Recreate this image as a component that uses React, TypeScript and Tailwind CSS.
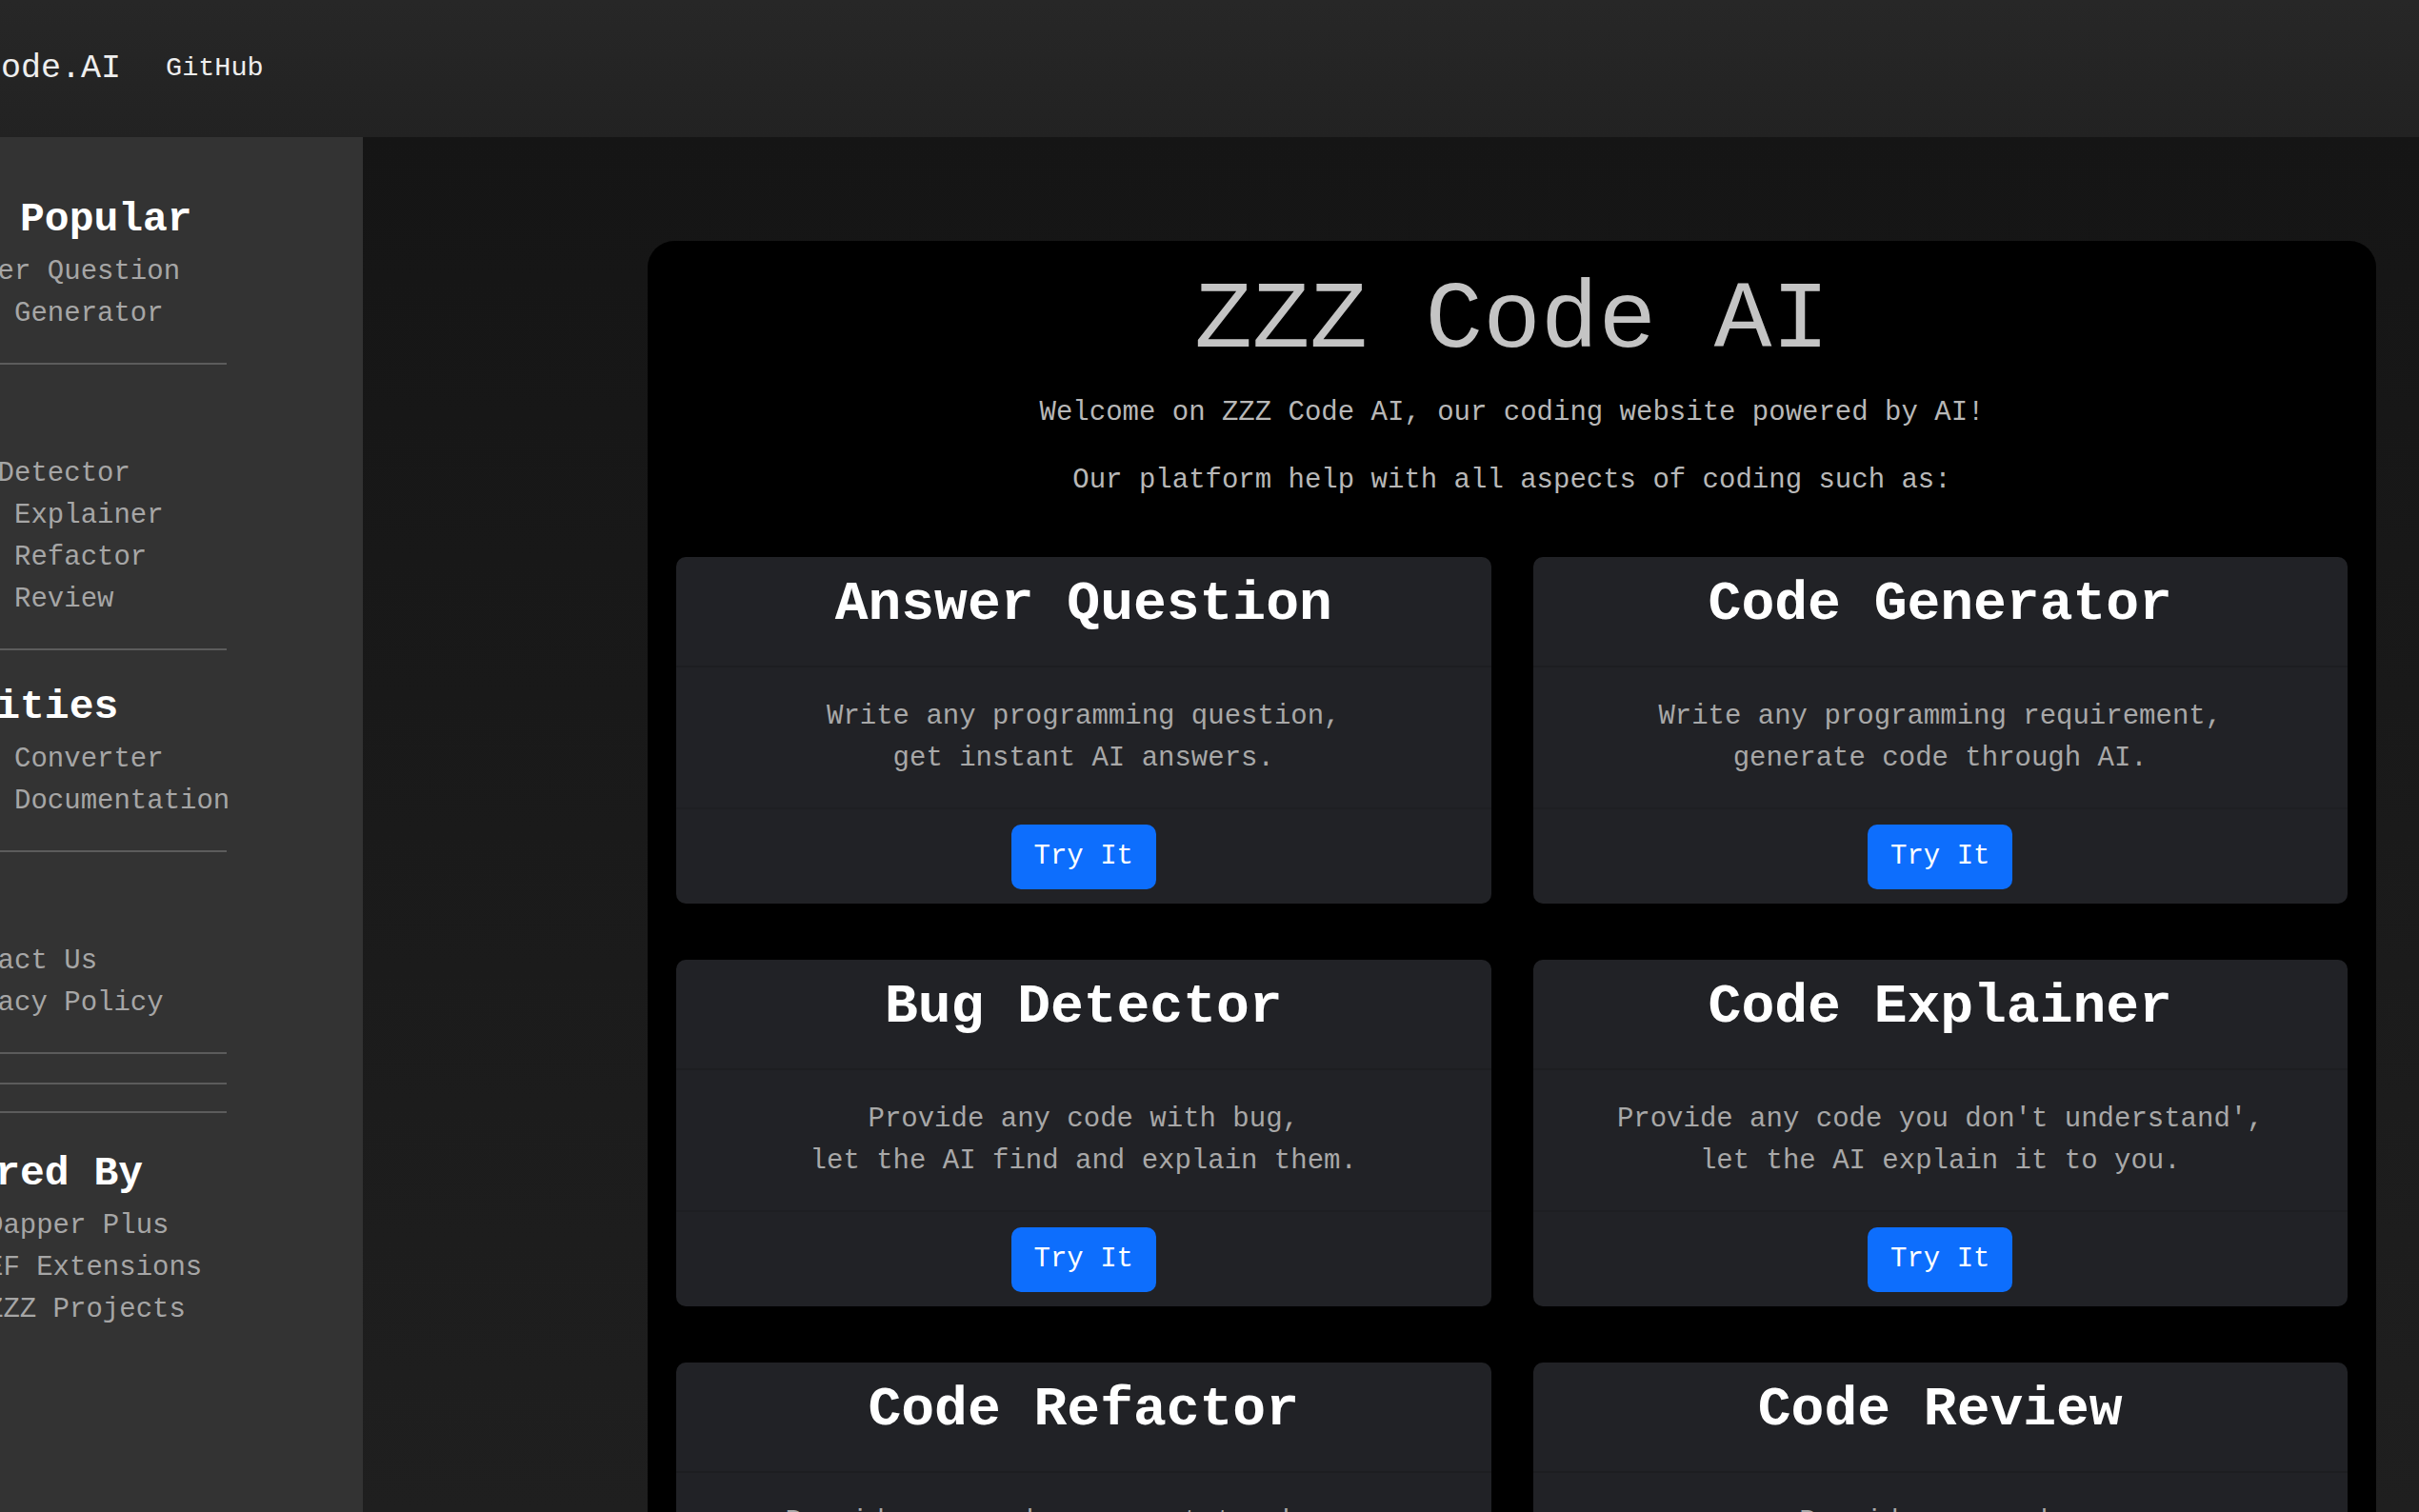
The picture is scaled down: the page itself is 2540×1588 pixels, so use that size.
import React from 'react';

const sections = [
  { title: 'Most Popular', items: ['Answer Question', 'Code Generator'] },
  { title: 'Code', items: ['Bug Detector', 'Code Explainer', 'Code Refactor', 'Code Review'] },
  { title: 'Utilities', items: ['Code Converter', 'Code Documentation'] },
  { title: 'Info', items: ['Contact Us', 'Privacy Policy'] },
];

const cards = [
  { title: 'Answer Question', lines: ['Write any programming question,', 'get instant AI answers.'] },
  { title: 'Code Generator', lines: ['Write any programming requirement,', 'generate code through AI.'] },
  { title: 'Bug Detector', lines: ['Provide any code with bug,', 'let the AI find and explain them.'] },
  { title: 'Code Explainer', lines: ["Provide any code you don't understand',", 'let the AI explain it to you.'] },
  { title: 'Code Refactor', lines: ['Provide any code you want to change,', 'let the AI refactor it for you.'] },
  { title: 'Code Review', lines: ['Provide any code,', 'let the AI review it for you.'] },
];

const Card = ({ title, lines }: { title: string; lines: string[] }) => {
  return (
    <div className="bg-[#212226] rounded-[10px] overflow-hidden flex flex-col">
      <div className="h-[116px] border-b-2 border-[#1d1e21] text-center pt-[15px]">
        <h2 className="text-[58px] leading-[70px] font-bold text-white">{title}</h2>
      </div>
      <div className="py-[30px] text-center text-[29px] leading-[43.5px] text-[#a8a8a8]">
        {lines.map((l) => (
          <div key={l} className="whitespace-pre">{l}</div>
        ))}
      </div>
      <div className="h-[101px] border-t-2 border-[#1e1f22] flex items-center justify-center">
        <button className="w-[152px] h-[68px] rounded-[10px] bg-[#0d6efd] text-white text-[29px]">Try It</button>
      </div>
    </div>
  );
};

const Sidebar = () => {
  return (
    <aside className="w-[381px] shrink-0 bg-[#333333] overflow-hidden">
      <div className="ml-[-108px] w-[346px] pt-[61px]">
        {sections.map((s) => (
          <div key={s.title}>
            <h3 className="text-[43px] leading-[52px] font-bold text-white whitespace-nowrap">{s.title}</h3>
            <ul className="mt-[7px] pl-[36px]">
              {s.items.map((i) => (
                <li key={i} className="text-[29px] leading-[44px] text-[#a6a6a6] whitespace-nowrap">{i}</li>
              ))}
            </ul>
            <hr className="mt-[29px] mb-[34px] border-t-2 border-[#5c5c5c]" />
          </div>
        ))}
        <hr className="-mt-[4px] border-t-2 border-[#5c5c5c]" />
        <hr className="mt-[28px] mb-[38px] border-t-2 border-[#5c5c5c]" />
        <h3 className="text-[43px] leading-[52px] font-bold text-white whitespace-nowrap">Powered By</h3>
        <ul className="mt-[7px] pl-[94px]">
          {['Dapper Plus', 'EF Extensions', 'ZZZ Projects'].map((i) => (
            <li key={i} className="text-[29px] leading-[44px] text-[#a6a6a6] whitespace-nowrap">{i}</li>
          ))}
        </ul>
      </div>
    </aside>
  );
};

export default function App() {
  return (
    <div className="w-[2540px] h-[1588px] overflow-hidden flex flex-col font-['Liberation_Mono',monospace]">
      <header className="h-[144px] shrink-0 bg-gradient-to-b from-[#272727] to-[#222222] flex items-center overflow-hidden">
        <span className="ml-[-83px] text-[35px] text-[#eeeeee] whitespace-nowrap">ZZZCode.AI</span>
        <a className="ml-[47px] text-[28.5px] text-[#eeeeee]">GitHub</a>
      </header>
      <div className="flex-1 flex min-h-0">
        <Sidebar />
        <main className="flex-1 overflow-hidden bg-gradient-to-b from-[#151515] to-[#1f1f1f] pl-[299px] pr-[45px] pt-[109px]">
          <div className="bg-black rounded-[28px] px-[30px] pt-[24px] pb-[40px]">
            <h1 className="text-center text-[101px] leading-[121px] text-[#c4c4c4]">ZZZ Code AI</h1>
            <p className="mt-[14px] text-center text-[29px] leading-[44px] text-[#b8b8b8]">
              Welcome on ZZZ Code AI, our coding website powered by AI!
            </p>
            <p className="mt-[27px] text-center text-[29px] leading-[44px] text-[#b8b8b8]">
              Our platform help with all aspects of coding such as:
            </p>
            <div className="mt-[58px] grid grid-cols-2 gap-x-[44px] gap-y-[59px]">
              {cards.map((c) => (
                <Card key={c.title} title={c.title} lines={c.lines} />
              ))}
            </div>
          </div>
        </main>
      </div>
    </div>
  );
}
